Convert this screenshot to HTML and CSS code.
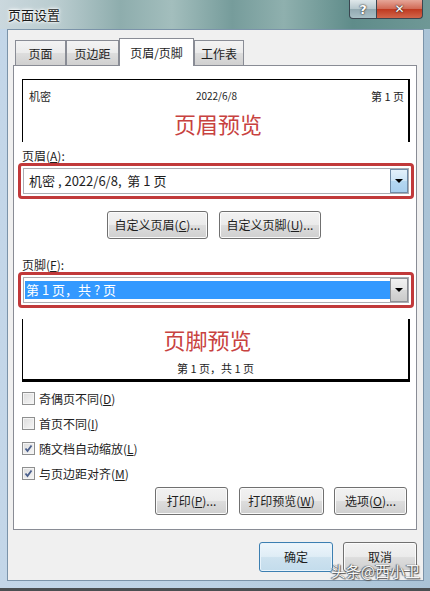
FILE: index.html
```html
<!DOCTYPE html>
<html lang="zh-CN">
<head>
    <meta charset="UTF-8">
    <title>页面设置</title>
    <link rel="stylesheet" href="styles.css">
</head>
<body>
    <div class="window">
        <div class="titlebar">
            <span class="title">页面设置</span>
            <div class="caption">
                <span class="cap-btn cap-help">?</span>
                <span class="cap-btn cap-close">✕</span>
            </div>
        </div>

        <div class="client">
            <!-- tab strip -->
            <div class="tabs">
                <div class="tab tab-page">页面</div>
                <div class="tab tab-margin">页边距</div>
                <div class="tab tab-active">页眉/页脚</div>
                <div class="tab tab-sheet">工作表</div>
            </div>

            <div class="panel">
                <!-- header preview -->
                <div class="preview preview-head">
                    <div class="preview-row">
                        <span class="left">机密</span>
                        <span class="mid">2022/6/8</span>
                        <span class="right">第 1 页</span>
                    </div>
                    <div class="note note-head">页眉预览</div>
                </div>

                <div class="field-label">页眉(<u>A</u>):</div>
                <div class="mark">
                    <div class="combo">
                        <span class="combo-text">机密 , 2022/6/8,  第 1 页</span>
                        <span class="drop drop-hot"><i class="arrow"></i></span>
                    </div>
                </div>

                <div class="btn-row custom-row">
                    <button class="btn btn-custom-head">自定义页眉(<u>C</u>)...</button>
                    <button class="btn btn-custom-foot">自定义页脚(<u>U</u>)...</button>
                </div>

                <div class="field-label label-foot">页脚(<u>F</u>):</div>
                <div class="mark">
                    <div class="combo">
                        <span class="combo-text combo-selected">第 1 页，共 ? 页</span>
                        <span class="drop"><i class="arrow"></i></span>
                    </div>
                </div>

                <!-- footer preview -->
                <div class="preview preview-foot">
                    <div class="note note-foot">页脚预览</div>
                    <div class="preview-foot-text">第 1 页，共 1 页</div>
                </div>

                <div class="checks">
                    <label class="check"><span class="box"></span><span>奇偶页不同(<u>D</u>)</span></label>
                    <label class="check"><span class="box"></span><span>首页不同(<u>I</u>)</span></label>
                    <label class="check"><span class="box checked"></span><span>随文档自动缩放(<u>L</u>)</span></label>
                    <label class="check"><span class="box checked"></span><span>与页边距对齐(<u>M</u>)</span></label>
                </div>

                <div class="btn-row print-row">
                    <button class="btn btn-print">打印(<u>P</u>)...</button>
                    <button class="btn btn-preview">打印预览(<u>W</u>)</button>
                    <button class="btn btn-options">选项(<u>O</u>)...</button>
                </div>
            </div>

            <div class="btn-row dialog-row">
                <button class="btn btn-dialog btn-default">确定</button>
                <button class="btn btn-dialog">取消</button>
            </div>
        </div>

        <span class="watermark">头条@西小卫</span>
    </div>
</body>
</html>
```

FILE: styles.css
```css
/* Win7 style "页面设置" dialog */
* { box-sizing: border-box; margin: 0; padding: 0; }
body { width: 430px; height: 591px; overflow: hidden; background: #4b4f52; font-family: "Noto Sans CJK SC", "Noto Sans", sans-serif; font-size: 12px; color: #1e1e1e; }
u { text-underline-offset: 1px; }

.window { position: relative; width: 430px; height: 591px; border-bottom: 3px solid #4b4f52; background: linear-gradient(90deg, #c3d6e8, #bcd1e4 50%, #aac3d6); }

/* title bar */
.titlebar { height: 29px; display: flex; align-items: flex-start; background: linear-gradient(90deg, #cbd8de 0%, #b8cbce 14%, #8eadad 28%, #a3bebd 40%, #769c9b 54%, #8fb0ae 66%, #5f8c8a 82%, #6f9896 100%); }
.title { padding: 6px 0 0 8px; font-size: 13px; line-height: 18px; color: #1a1a1a; text-shadow: 0 0 5px #fff, 0 0 3px #fff, 0 0 2px #fff; }
.caption { display: flex; margin-left: auto; margin-right: 7px; }
.cap-btn { height: 19px; display: flex; align-items: center; justify-content: center; border: 1px solid #3a4650; border-top: none; color: #fff; font: bold 13px "DejaVu Sans", sans-serif; text-shadow: 0 0 2px #2a2a2a, 0 0 1px #2a2a2a; }
.cap-help { width: 28px; border-radius: 0 0 0 4px; background: linear-gradient(#dfe7ea, #b7c8ce 48%, #93aab2 52%, #a9bfc6); }
.cap-close { width: 46px; border-left: none; border-radius: 0 0 4px 0; background: linear-gradient(#e6a698, #d16b57 48%, #bf3a21 52%, #d2664b); font-size: 12px; }

/* client area */
.client { margin-left: 7px; width: 417px; height: 552px; border: 1px solid #7b93a9; background: #f0f0f0; padding: 8px 6px 0 5px; }

.tabs { display: flex; align-items: flex-end; height: 27px; padding-left: 2px; }
.tab { height: 25px; border: 1px solid #898c95; border-bottom: none; text-align: center; line-height: 25px; background: linear-gradient(#f3f3f3, #ebebeb 48%, #dddddd 52%, #d0d0d0); }
.tab-page { width: 51px; }
.tab-margin { width: 53px; }
.tab-sheet { width: 50px; }
.tab-active { position: relative; z-index: 1; width: 75px; height: 28px; margin-bottom: -1px; line-height: 27px; background: #fff; }

.panel { height: 465px; background: #fff; border: 1px solid #898c95; padding: 13px 6px 0 8px; }

/* preview boxes */
.preview { height: 63px; border: 1px solid #000; }
.preview-head { border-bottom: none; border-right-width: 2px; }
.preview-row { display: grid; grid-template-columns: 1fr auto 1fr; padding: 9px 4px 0 6px; font-size: 11px; line-height: 14px; }
.preview-row .mid { font-size: 10px; }
.preview-row .right { text-align: right; }
.note { font-size: 22px; line-height: 24px; color: #c8423f; text-align: center; }
.note-head { margin-top: 8px; padding-left: 5px; }
.preview-foot { margin-top: 11px; border-top: none; border-right-width: 2px; border-bottom-width: 3px; padding-top: 8px; }
.note-foot { padding-right: 16px; }
.preview-foot-text { margin-top: 10px; font-size: 11px; line-height: 14px; text-align: center; }

.field-label { margin-top: 7px; line-height: 14px; }
.label-foot { margin-top: 19px; }

/* red annotation frame round the combo boxes */
.mark { margin: 0 -4px 0 -4px; border: 3px solid #c1393a; border-radius: 4px; padding: 2px; }
.combo { height: 26px; display: flex; border: 1px solid #abadb3; background: #fff; }
.combo-text { flex: 1; padding-left: 5px; font-size: 13px; line-height: 24px; white-space: pre; }
.combo-selected { margin: 3px 0 3px 1px; padding-left: 1px; line-height: 18px; background: #3399ff; color: #fff; }
.drop { width: 18px; display: flex; align-items: center; justify-content: center; border: 1px solid #8c8f94; background: linear-gradient(#f2f2f2, #e6e6e6 48%, #d8d8d8 52%, #cacaca); }
.drop-hot { border-color: #6f8ba6; background: linear-gradient(#e3f1fb, #cde5f6 48%, #b4d7f1 52%, #a8cfee); }
.arrow { width: 0; height: 0; border-left: 4px solid transparent; border-right: 4px solid transparent; border-top: 4px solid #000; }

/* buttons */
.btn-row { display: flex; }
.btn { height: 28px; border: 1px solid #707070; border-radius: 3px; background: linear-gradient(#f2f2f2, #ebebeb 48%, #dddddd 52%, #cfcfcf); box-shadow: inset 0 0 0 1px #fbfbfb; font: inherit; color: #1e1e1e; line-height: 26px; }
.custom-row { justify-content: center; gap: 11px; margin-top: 12px; padding-right: 4px; }
.btn-custom-head { width: 101px; }
.btn-custom-foot { width: 102px; }

.checks { margin-top: 4px; }
.check { height: 25px; display: flex; align-items: center; gap: 4px; }
.box { width: 13px; height: 13px; border: 1px solid #8e8f8f; background: linear-gradient(135deg, #dcdcdc, #f6f6f6); box-shadow: inset 0 0 0 1px #f4f4f4; }
.box.checked { background: url("data:image/svg+xml,%3Csvg xmlns='http://www.w3.org/2000/svg' width='11' height='11'%3E%3Cpath d='M2.5 5.5 L4.5 8 L8.5 2.5' fill='none' stroke='%234a5f8c' stroke-width='1.8'/%3E%3C/svg%3E") center no-repeat, linear-gradient(135deg, #dcdcdc, #f6f6f6); }

.print-row { justify-content: flex-end; margin-top: 1px; margin-right: 3px; }
.btn-print { width: 73px; }
.btn-preview { width: 85px; margin: 0 10px 0 11px; }
.btn-options { width: 73px; }

.dialog-row { justify-content: flex-end; gap: 10px; margin-top: 12px; }
.btn-dialog { width: 74px; height: 30px; line-height: 28px; }
.btn-default { border-color: #3c7fb1; background: linear-gradient(#eef6fb, #dfedf6 48%, #cde2ef 52%, #c3dcec); box-shadow: inset 0 0 0 1px #e8f3fb; }

.watermark { position: absolute; right: 10px; bottom: 8px; font-size: 15px; line-height: 18px; color: #f6f6f6; text-shadow: 0 0 1px #444, 1px 1px 1px #555, -1px 0 1px #666; }
```
